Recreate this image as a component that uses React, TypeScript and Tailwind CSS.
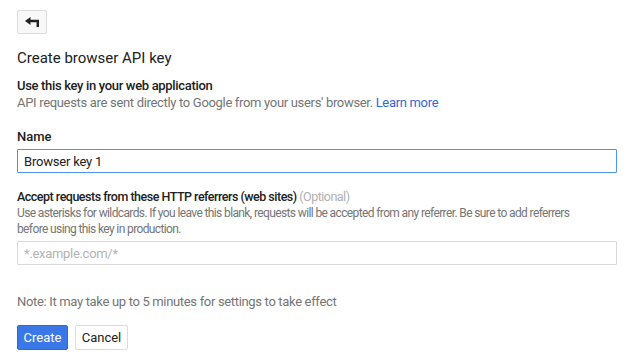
import { useState } from "react";

function BackArrow() {
  return (
    <svg width="15" height="10" viewBox="0 0 15 10" aria-hidden>
      <path d="M0 4 L5.5 0 V2.8 H14 V10 H11.6 V5.2 H5.5 V8 Z" fill="#222" />
    </svg>
  );
}

export default function App() {
  const [name, setName] = useState("Browser key 1");
  const [referrers, setReferrers] = useState("");

  return (
    <div className="min-h-[364px] w-[636px] bg-white px-[17px] pt-[10px] font-['Roboto',sans-serif] text-[#212121]">
      <button
        type="button"
        aria-label="Back"
        className="flex h-[24px] w-[30px] items-center justify-center rounded-[2px] border border-[#dcdcdc] bg-[#f8f8f8]"
      >
        <BackArrow />
      </button>

      <h1 className="mt-[14px] text-[15px] leading-[20px] text-[#212121]">Create browser API key</h1>

      <div className="mt-[10px] text-[13px] font-medium leading-[16px] tracking-[-0.33px]">
        Use this key in your web application
      </div>
      <p className="mt-[1px] text-[13px] leading-[16px] tracking-[-0.32px] text-[#757575]">
        API requests are sent directly to Google from your users' browser.{" "}
        <a className="text-[#3367d6]" href="#">
          Learn more
        </a>
      </p>

      <label className="mt-[18px] block text-[13px] font-medium leading-[16px]">Name</label>
      <input
        value={name}
        onChange={(e) => setName(e.target.value)}
        className="mt-[4px] block h-[24px] w-[600px] rounded-[1px] border border-[#4d90fe] px-[6px] text-[13px] tracking-[-0.2px] text-[#212121] outline-none"
      />

      <div className="mt-[16px] text-[12.5px] font-medium leading-[16px] tracking-[-0.5px]">
        Accept requests from these HTTP referrers (web sites){" "}
        <span className="font-normal text-[#b0b0b0]">(Optional)</span>
      </div>
      <p className="max-w-[580px] text-[12px] leading-[16px] tracking-[-0.62px] text-[#757575]">
        Use asterisks for wildcards. If you leave this blank, requests will be accepted from any referrer. Be sure to add
        referrers before using this key in production.
      </p>
      <input
        value={referrers}
        onChange={(e) => setReferrers(e.target.value)}
        placeholder="*.example.com/*"
        className="mt-[4px] block h-[24px] w-[600px] rounded-[1px] border border-[#d9d9d9] px-[6px] text-[13px] tracking-[-0.3px] outline-none placeholder:text-[#b3b3b3]"
      />

      <p className="mt-[29px] text-[13px] leading-[16px] tracking-[-0.33px] text-[#757575]">
        Note: It may take up to 5 minutes for settings to take effect
      </p>

      <div className="mt-[15px] flex gap-[7px]">
        <button
          type="button"
          className="h-[25px] w-[51px] rounded-[2px] border border-[#3367d6] bg-[#3b78e7] text-[13px] text-white"
        >
          Create
        </button>
        <button
          type="button"
          className="h-[25px] w-[53px] rounded-[2px] border border-[#dcdcdc] bg-white text-[13px] text-[#212121]"
        >
          Cancel
        </button>
      </div>
    </div>
  );
}
